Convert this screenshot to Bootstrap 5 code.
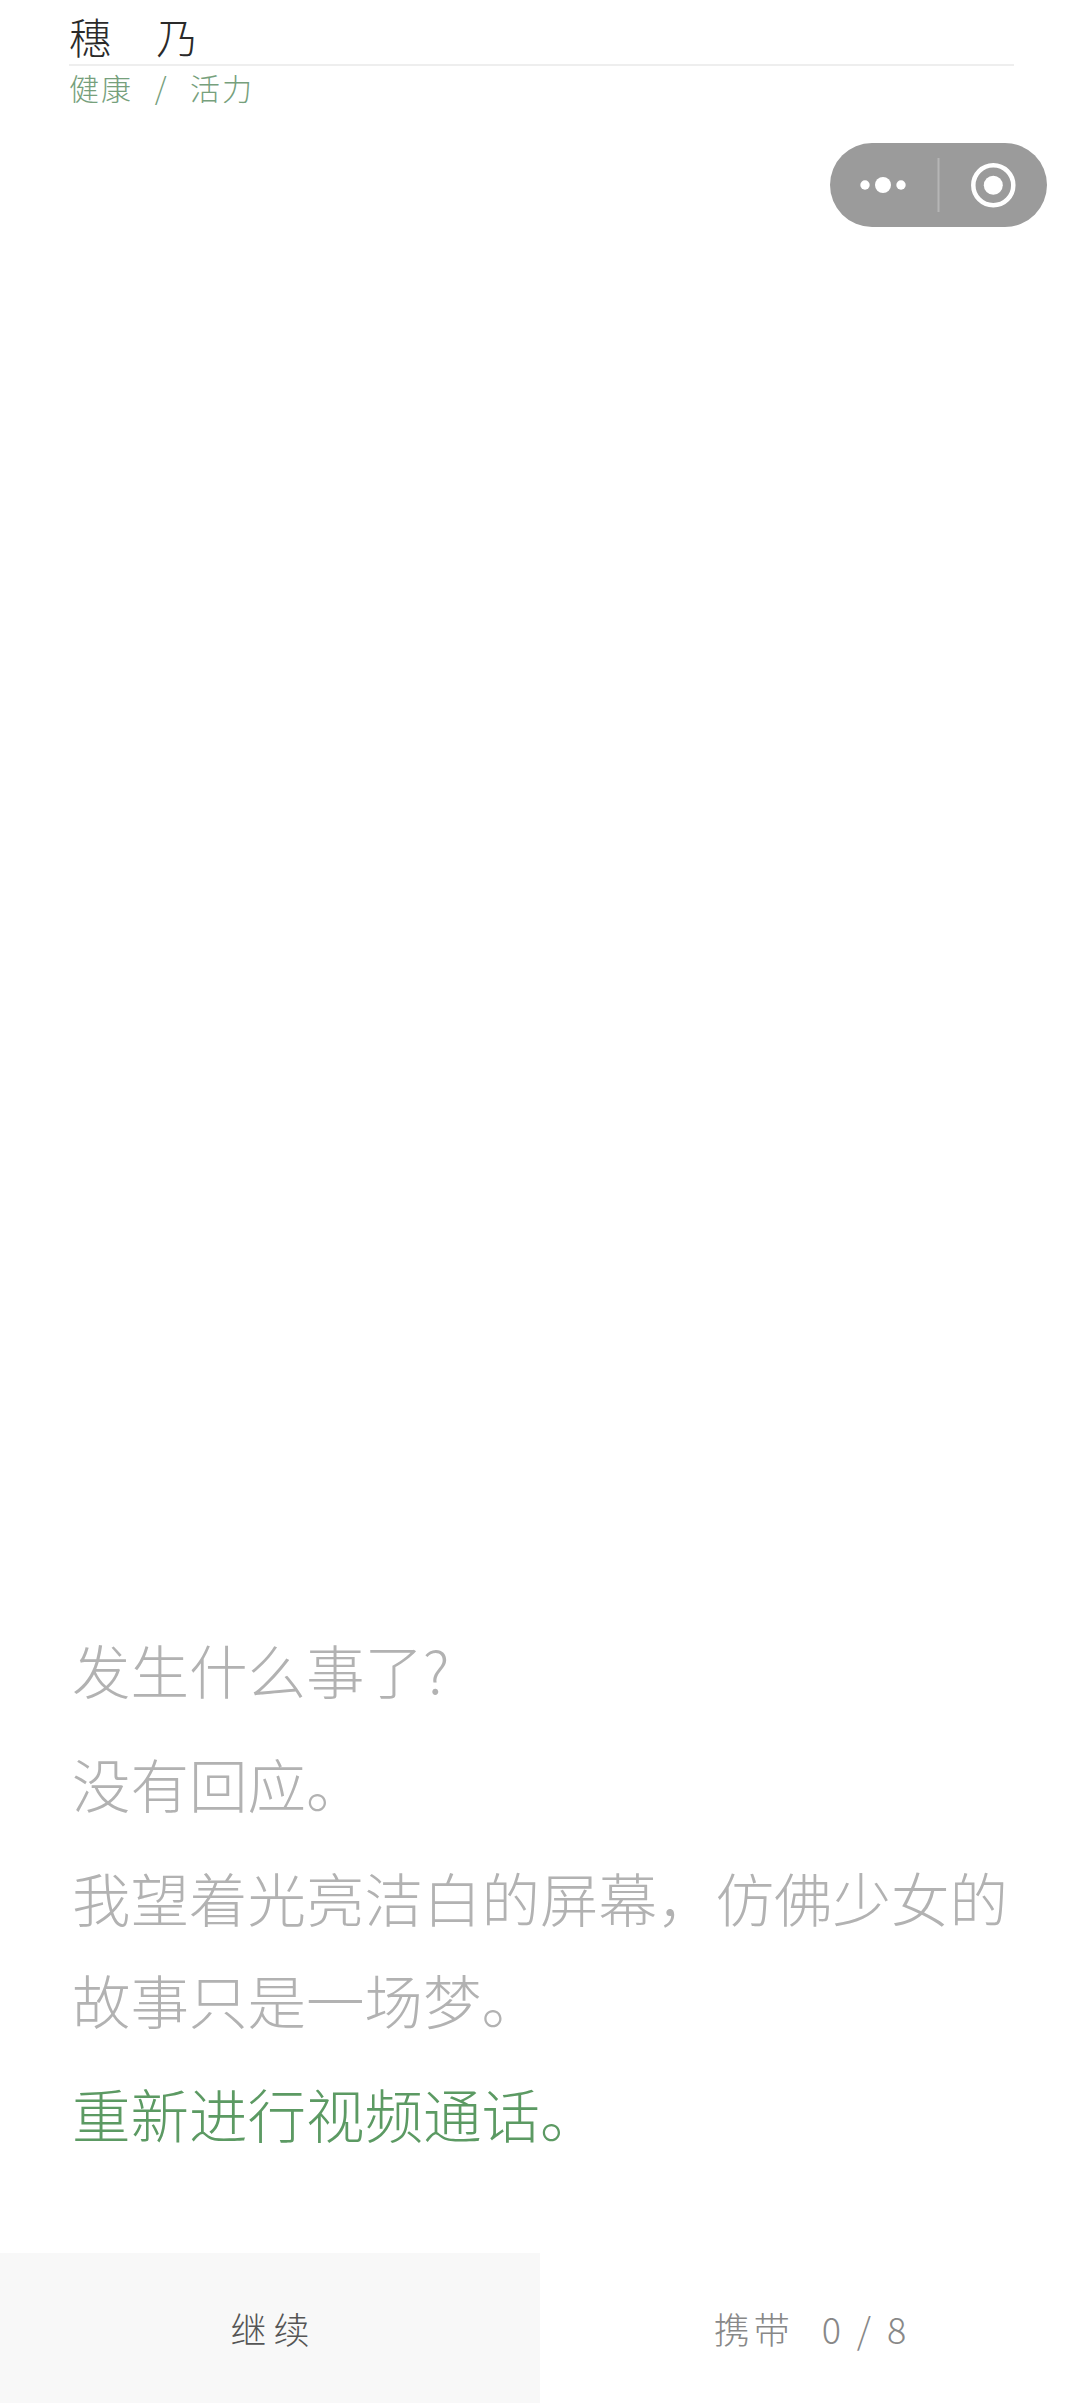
<!DOCTYPE html>
<html lang="zh">
<head>
<meta charset="utf-8">
<link href="https://cdn.jsdelivr.net/npm/bootstrap@5.3.0/dist/css/bootstrap.min.css" rel="stylesheet">
<style>
html,body{height:100%;background:#fff;}
body{font-family:"Noto Sans CJK SC","Liberation Sans",sans-serif;font-weight:300;}
.stage{height:2403px;}
.head-block{padding:8px 66px 0 69px;}
.who{font-size:42px;line-height:56px;color:#2a2a2a;letter-spacing:18px;border-bottom:2px solid #eee;}
.kind{font-size:30px;line-height:43px;color:#76a07c;letter-spacing:2px;word-spacing:13px;}
.capsule{position:absolute;left:830px;top:143px;width:217px;height:84px;border-radius:42px;background:#9b9b9b;}
.story{padding:0 63px 77px 72px;font-size:58.5px;line-height:102px;color:#b2b2b2;}
.story p{margin:0 0 12px;}
.again{color:#5c9a63;}
.foot{height:150px;font-size:36px;}
.foot-l{background:#f8f8f8;color:#555;letter-spacing:7px;padding-left:7px;}
.foot-r{color:#888;letter-spacing:4px;padding-left:4px;}
</style>
</head>
<body>
<div class="stage d-flex flex-column position-relative">
  <div class="head-block">
    <div class="who">穗 乃</div>
    <div class="kind">健康 / 活力</div>
  </div>
  <svg class="capsule" viewBox="0 0 217 84" role="img" aria-label="menu">
    <circle cx="35" cy="42" r="4.700" fill="#fff"/>
    <circle cx="53" cy="42" r="8" fill="#fff"/>
    <circle cx="71" cy="42" r="4.700" fill="#fff"/>
    <rect x="107.500" y="15" width="2" height="54" fill="#b5b5b5"/>
    <circle cx="163.300" cy="42.300" r="20" fill="none" stroke="#fff" stroke-width="4.500"/>
    <circle cx="163.300" cy="42.300" r="9.500" fill="#fff"/>
  </svg>
  <div class="story mt-auto">
    <p>发生什么事了?</p>
    <p>没有回应。</p>
    <p>我望着光亮洁白的屏幕，仿佛少女的故事只是一场梦。</p>
    <p class="again">重新进行视频通话。</p>
  </div>
  <div class="foot row g-0 flex-shrink-0">
    <div class="col-6 foot-l d-flex align-items-center justify-content-center">继续</div>
    <div class="col-6 foot-r d-flex align-items-center justify-content-center"><span>携带&nbsp;&nbsp;<span class="ms-1">0 / 8</span></span></div>
  </div>
</div>
<script src="https://cdn.jsdelivr.net/npm/bootstrap@5.3.0/dist/js/bootstrap.bundle.min.js"></script>
</body>
</html>
